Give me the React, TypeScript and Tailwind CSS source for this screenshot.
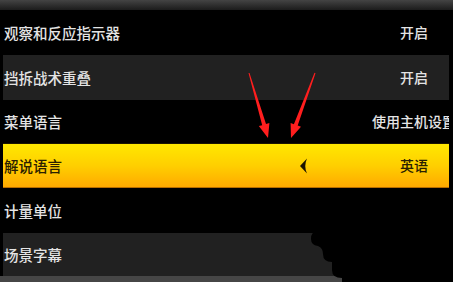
import React from 'react';

type Row = {
  label: string;
  value?: string;
  bg: 'black' | 'gray' | 'active';
  h: string;
};

const rows: Row[] = [
  { label: '观察和反应指示器', value: '开启', bg: 'black', h: 'h-[45px]' },
  { label: '挡拆战术重叠', value: '开启', bg: 'gray', h: 'h-[45px]' },
  { label: '菜单语言', value: '使用主机设置', bg: 'black', h: 'h-[43px]' },
  { label: '解说语言', value: '英语', bg: 'active', h: 'h-[45px]' },
  { label: '计量单位', bg: 'black', h: 'h-[45px]' },
  { label: '场景字幕', bg: 'gray', h: 'h-[43px]' },
];

const font = { fontFamily: '"Noto Sans CJK SC", "Noto Sans", sans-serif' };

function SettingRow({ row }: { row: Row }) {
  const active = row.bg === 'active';
  const bgClass =
    row.bg === 'gray'
      ? 'bg-[#212121]'
      : active
        ? 'bg-gradient-to-b from-[#ffe800] via-[#ffcf00] to-[#ffaa00] border-t border-[#1a1400] border-b border-b-[#b86e00]'
        : 'bg-black';

  return (
    <div className={`${row.h} ${bgClass} flex items-center overflow-hidden`}>
      <div
        className={`flex-1 min-w-0 pl-px text-[14.5px] font-medium whitespace-nowrap ${
          active ? 'text-[#2a2000]' : 'text-[#e4e4e4]'
        }`}
      >
        {row.label}
      </div>
      {active && (
        <svg width="8" height="16" viewBox="0 0 8 16" className="shrink-0 mr-[46px]">
          <path d="M7 0.5 L0 8 L7 15.5 Q3.5 8 7 0.5 Z" fill="#1c1400" />
        </svg>
      )}
      <div
        className={`w-[120px] mr-[-25px] shrink-0 text-center text-[14px] font-medium whitespace-nowrap ${
          active ? 'text-[#2a2000]' : 'text-[#e4e4e4]'
        }`}
      >
        {row.value}
      </div>
    </div>
  );
}

export default function App() {
  return (
    <div className="relative w-[453px] h-[282px] bg-black overflow-hidden" style={font}>
      {/* Top bar */}
      <div className="h-[10px] bg-gradient-to-b from-[#444444] to-[#1c1c1c]" />

      {/* Settings list */}
      <div className="pl-[3px] pr-[4px]">
        {rows.map((row) => (
          <SettingRow key={row.label} row={row} />
        ))}
      </div>

      {/* Bottom bar */}
      <div className="h-[6px] bg-[#464646]" />

      {/* Annotations: red arrows and redaction blob */}
      <svg
        className="absolute inset-0 pointer-events-none"
        width="453"
        height="282"
        viewBox="0 0 453 282"
      >
        <polygon
          points="249.5,72.9 266,124 269.4,123.1 268,138 258.8,126.1 262.2,125.2 248.5,73.1"
          fill="#ff1e1e"
        />
        <polygon
          points="315.5,73.2 297.7,125.6 301,126.8 291,138 290.6,123 293.9,124.2 314.5,72.8"
          fill="#ff1e1e"
        />
        <path
          d="M318 231 L453 231 L453 282 L342 282 L342 278 Q332 278 332 270 L332 262 Q323 262 323 254 Q323 248 318 246 Q311 245 311 239 Q311 231 318 231 Z"
          fill="#000000"
        />
      </svg>
    </div>
  );
}
